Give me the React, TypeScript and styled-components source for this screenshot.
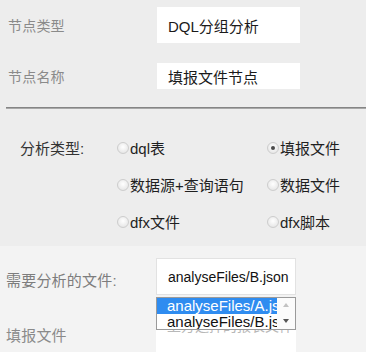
import styled, { createGlobalStyle } from 'styled-components';

const GlobalStyle = createGlobalStyle`
  html, body {
    margin: 0;
    padding: 0;
    background: #ededed;
  }
  body {
    font-family: "Liberation Sans", "Noto Sans CJK SC", sans-serif;
    overflow: hidden;
  }
`;

const Page = styled.div`
  width: 366px;
  height: 352px;
  overflow: hidden;
  background: #ededed;
`;

const NodeForm = styled.div`
  display: grid;
  grid-template-columns: 149px 143px;
  grid-template-rows: 50px 52px;
  align-items: center;
  padding-left: 8px;
`;

const GrayLabel = styled.span`
  font-size: 14px;
  color: #8a8a8a;
  letter-spacing: 0.2px;
`;

const ValueBox = styled.div<{ $h: number }>`
  height: ${(p) => p.$h}px;
  background: #fff;
  display: flex;
  align-items: center;
  padding-left: 11px;
  font-size: 15px;
  color: #1a1a1a;
`;

const Divider = styled.div`
  margin: 5px 0 0 6px;
  border-top: 1px solid #858585;
  border-bottom: 1px solid #a8a8a8;
`;

const TypeSection = styled.div`
  display: grid;
  grid-template-columns: 97px 150px 1fr;
  grid-auto-rows: 37px;
  align-items: center;
  padding: 20px 0 6px 20px;
`;

const TypeLabel = styled.span`
  font-size: 15px;
  color: #333;
`;

const Option = styled.label<{ $col: number }>`
  grid-column: ${(p) => p.$col};
  display: flex;
  align-items: center;
  gap: 1px;
  font-size: 15px;
  color: #1f1f1f;
`;

const RadioDot = styled.span<{ $on?: boolean }>`
  width: 10px;
  height: 10px;
  border-radius: 50%;
  border: 1px solid #cdcdcd;
  background: radial-gradient(circle at 50% 40%, #ffffff 0%, #e9e9e9 70%, #d6d6d6 100%);
  display: flex;
  align-items: center;
  justify-content: center;
  box-sizing: content-box;
  &::after {
    content: '';
    width: 4px;
    height: 4px;
    border-radius: 50%;
    background: ${(p) => (p.$on ? '#4a4a4a' : 'transparent')};
  }
`;

const FileSection = styled.div`
  background: #f3f3f3;
  padding: 12px 0 0 6px;
  display: grid;
  grid-template-columns: 150px 140px;
  grid-template-rows: 37px 56px;
  row-gap: 21px;
  align-items: center;
`;

const FileField = styled.div`
  position: relative;
  height: 37px;
  box-sizing: border-box;
  background: #fff;
  border: 1px solid #e2e2e2;
  display: flex;
  align-items: center;
  padding-left: 11px;
  font-size: 14px;
  color: #111;
`;

const FileLabel = styled(GrayLabel)`
  font-size: 15px;
  color: #7d7d7d;
  align-self: center;
  margin-top: 5px;
`;

const ReportLabel = styled(GrayLabel)`
  font-size: 15px;
  color: #8a8a8a;
  align-self: start;
  margin-top: 8px;
`;

const ReportField = styled.div`
  align-self: start;
  margin-top: -4px;
  height: 60px;
  background: #fff;
  padding: 3px 0 0 11px;
  font-size: 14px;
  color: #b8b8b8;
  white-space: nowrap;
  overflow: hidden;
`;

const Dropdown = styled.div`
  position: absolute;
  left: -1px;
  top: 38px;
  width: 140px;
  height: 33px;
  box-sizing: border-box;
  border: 1px solid #9a9a9a;
  background: #fff;
  display: flex;
  z-index: 2;
`;

const OptionList = styled.div`
  flex: 1;
  min-width: 0;
  display: flex;
  flex-direction: column;
`;

const ListItem = styled.div<{ $sel?: boolean }>`
  height: 16px;
  line-height: 16px;
  padding-left: 10px;
  font-size: 15px;
  white-space: nowrap;
  overflow: hidden;
  background: ${(p) => (p.$sel ? '#2f8cf0' : '#fff')};
  color: ${(p) => (p.$sel ? '#fff' : '#111')};
`;

const ScrollTrack = styled.div`
  width: 18px;
  display: flex;
  flex-direction: column;
  align-items: center;
  justify-content: space-between;
  padding: 5px 0 6px;
  box-sizing: border-box;
  background: #fbfbfb;
`;

const Arrow = styled.span<{ $up?: boolean }>`
  width: 0;
  height: 0;
  border-left: 3.5px solid transparent;
  border-right: 3.5px solid transparent;
  ${(p) =>
    p.$up ? 'border-bottom: 4px solid #c2c2c2;' : 'border-top: 4px solid #555;'}
`;

export default function App() {
  const types = [
    { text: 'dql表', col: 2 },
    { text: '填报文件', col: 3, on: true },
    { text: '数据源+查询语句', col: 2 },
    { text: '数据文件', col: 3 },
    { text: 'dfx文件', col: 2 },
    { text: 'dfx脚本', col: 3 },
  ];
  return (
    <>
      <GlobalStyle />
      <Page>
        <NodeForm>
          <GrayLabel>节点类型</GrayLabel>
          <ValueBox $h={36}>DQL分组分析</ValueBox>
          <GrayLabel>节点名称</GrayLabel>
          <ValueBox $h={26}>填报文件节点</ValueBox>
        </NodeForm>
        <Divider />
        <TypeSection>
          <TypeLabel>分析类型:</TypeLabel>
          {types.map((t) => (
            <Option key={t.text} $col={t.col}>
              <RadioDot $on={t.on} />
              {t.text}
            </Option>
          ))}
        </TypeSection>
        <FileSection>
          <FileLabel>需要分析的文件:</FileLabel>
          <FileField>
            analyseFiles/B.json
            <Dropdown>
              <OptionList>
                <ListItem $sel>analyseFiles/A.json</ListItem>
                <ListItem>analyseFiles/B.json</ListItem>
              </OptionList>
              <ScrollTrack>
                <Arrow $up />
                <Arrow />
              </ScrollTrack>
            </Dropdown>
          </FileField>
          <ReportLabel>填报文件</ReportLabel>
          <ReportField>上方选择的报表文件</ReportField>
        </FileSection>
      </Page>
    </>
  );
}
